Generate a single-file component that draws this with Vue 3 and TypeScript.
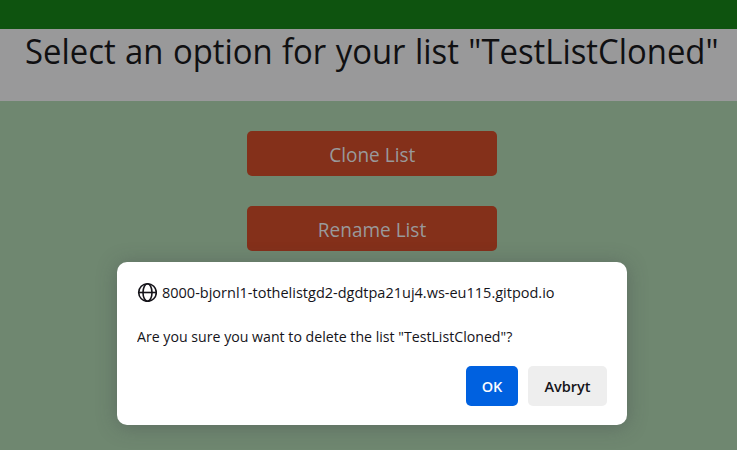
<script setup lang="ts">
import { ref } from 'vue'

const listName = ref<string>('TestListCloned')
const options: string[] = ['Clone List', 'Rename List']
const origin = '8000-bjornl1-tothelistgd2-dgdtpa21uj4.ws-eu115.gitpod.io'
</script>

<template>
  <div class="page">
    <div class="topbar"></div>
    <header class="heading">
      <h1><span>Select an option for your list "{{ listName }}"</span></h1>
    </header>
    <main class="options">
      <button v-for="option in options" :key="option" class="option">
        <span>{{ option }}</span>
      </button>
    </main>
    <div class="dialog" role="dialog">
      <div class="origin">
        <svg class="globe" viewBox="0 0 20 20" fill="none" stroke="#15141a" stroke-width="1.6">
          <circle cx="10.5" cy="10.5" r="8.8" />
          <ellipse cx="10.5" cy="10.5" rx="4.5" ry="8.8" />
          <path d="M1.7 10.5H19.3" />
        </svg>
        <span class="host">{{ origin }}</span>
      </div>
      <p class="message"><span>Are you sure you want to delete the list "{{ listName }}"?</span></p>
      <div class="actions">
        <button class="action primary"><span>OK</span></button>
        <button class="action cancel"><span>Avbryt</span></button>
      </div>
    </div>
  </div>
</template>

<style>
body {
  margin: 0;
}
</style>

<style scoped>
.page {
  position: relative;
  height: 450px;
  overflow: hidden;
  background: #6f8770;
  font-family: 'Open Sans', 'Noto Sans', sans-serif;
}
.topbar {
  height: 29px;
  background: #0e530f;
}
.heading {
  height: 72px;
  padding-left: 25px;
  background: #99999a;
}
h1 {
  margin: 0;
  color: #101012;
  font-size: 35px;
  font-weight: 400;
  line-height: 44px;
  white-space: nowrap;
  word-spacing: 1px;
}
h1 span,
.message span {
  display: inline-block;
  transform: scaleX(0.938);
  transform-origin: 0 50%;
}
.options {
  display: flex;
  flex-direction: column;
  align-items: center;
  gap: 30px;
  padding: 30px 0 0 7px;
}
button {
  display: flex;
  align-items: center;
  justify-content: center;
  margin: 0;
  padding: 0;
  border: 0;
  font-family: inherit;
  white-space: nowrap;
}
.option {
  width: 250px;
  height: 45px;
  padding-top: 2px;
  border-radius: 5px;
  background: #84301a;
  color: #99999a;
  font-size: 20px;
}
.option span {
  transform: scaleX(0.95);
}
.dialog {
  position: absolute;
  left: 117px;
  top: 262px;
  box-sizing: border-box;
  width: 510px;
  height: 163px;
  padding: 20px;
  border-radius: 10px;
  background: #fff;
  box-shadow: 0 2px 20px rgba(58, 57, 68, 0.35);
  color: #15141a;
  white-space: nowrap;
}
.origin {
  display: flex;
  align-items: center;
  gap: 5px;
  height: 20px;
  font-size: 14.5px;
  font-weight: 500;
}
.globe {
  flex: none;
  width: 20px;
  height: 20px;
}
.message {
  height: 20px;
  margin: 25px 0 19px;
  font-size: 14.5px;
  line-height: 20px;
}
.message span {
  transform: scaleX(0.976);
}
.actions {
  display: flex;
  justify-content: flex-end;
  gap: 10px;
}
.action {
  height: 40px;
  border-radius: 5px;
  font-size: 14.5px;
  font-weight: 550;
}
.primary {
  width: 52px;
  background: #0061e0;
  color: #fbfbfe;
}
.cancel {
  width: 79px;
  background: #eee;
  color: #15141a;
}
</style>
